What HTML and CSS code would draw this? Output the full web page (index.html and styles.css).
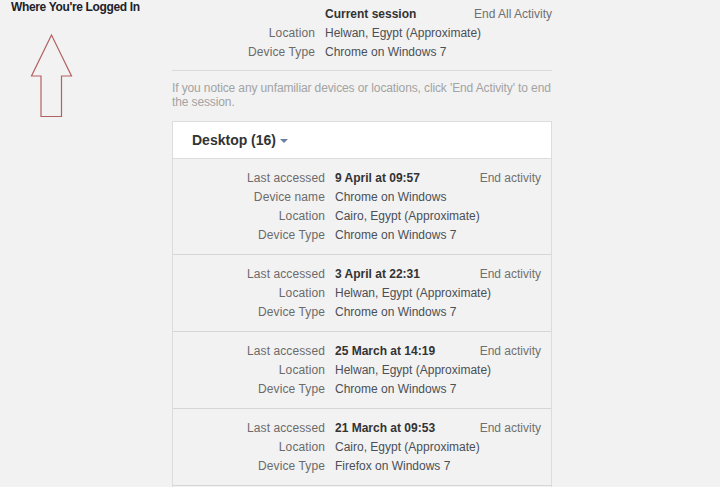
FILE: index.html
```html
<!DOCTYPE html>
<html lang="en">
<head>
    <meta charset="UTF-8">
    <meta name="viewport" content="width=device-width, initial-scale=1.0">
    <title>Where You're Logged In</title>
    <link rel="stylesheet" href="styles.css">
</head>
<body>
    <div id="page">
        <div id="sideColumn">
            <h1>Where You're Logged In</h1>
            <svg class="arrow" width="80" height="110" viewBox="0 0 80 110">
                <polygon points="40.5,21 20.5,62 30,62 30,102.5 50.5,102.5 50.5,62 60.5,62" fill="none" stroke="#b36060" stroke-width="1.2" stroke-linejoin="miter"/>
            </svg>
        </div>

        <div id="mainColumn">
            <div class="current">
                <div class="info-row">
                    <span class="label"></span>
                    <span class="value strong">Current session</span>
                    <span class="action">End All Activity</span>
                </div>
                <div class="info-row">
                    <span class="label">Location</span>
                    <span class="value">Helwan, Egypt (Approximate)</span>
                </div>
                <div class="info-row">
                    <span class="label">Device Type</span>
                    <span class="value">Chrome on Windows 7</span>
                </div>
            </div>

            <p class="notice">If you notice any unfamiliar devices or locations, click 'End Activity' to end the session.</p>

            <div class="card">
                <div class="card-header">
                    Desktop (16) <span class="caret"></span>
                </div>

                <div class="session">
                    <div class="info-row">
                        <span class="label">Last accessed</span>
                        <span class="value strong">9 April at 09:57</span>
                        <span class="action">End activity</span>
                    </div>
                    <div class="info-row">
                        <span class="label">Device name</span>
                        <span class="value">Chrome on Windows</span>
                    </div>
                    <div class="info-row">
                        <span class="label">Location</span>
                        <span class="value">Cairo, Egypt (Approximate)</span>
                    </div>
                    <div class="info-row">
                        <span class="label">Device Type</span>
                        <span class="value">Chrome on Windows 7</span>
                    </div>
                </div>

                <div class="session">
                    <div class="info-row">
                        <span class="label">Last accessed</span>
                        <span class="value strong">3 April at 22:31</span>
                        <span class="action">End activity</span>
                    </div>
                    <div class="info-row">
                        <span class="label">Location</span>
                        <span class="value">Helwan, Egypt (Approximate)</span>
                    </div>
                    <div class="info-row">
                        <span class="label">Device Type</span>
                        <span class="value">Chrome on Windows 7</span>
                    </div>
                </div>

                <div class="session">
                    <div class="info-row">
                        <span class="label">Last accessed</span>
                        <span class="value strong">25 March at 14:19</span>
                        <span class="action">End activity</span>
                    </div>
                    <div class="info-row">
                        <span class="label">Location</span>
                        <span class="value">Helwan, Egypt (Approximate)</span>
                    </div>
                    <div class="info-row">
                        <span class="label">Device Type</span>
                        <span class="value">Chrome on Windows 7</span>
                    </div>
                </div>

                <div class="session">
                    <div class="info-row">
                        <span class="label">Last accessed</span>
                        <span class="value strong">21 March at 09:53</span>
                        <span class="action">End activity</span>
                    </div>
                    <div class="info-row">
                        <span class="label">Location</span>
                        <span class="value">Cairo, Egypt (Approximate)</span>
                    </div>
                    <div class="info-row">
                        <span class="label">Device Type</span>
                        <span class="value">Firefox on Windows 7</span>
                    </div>
                </div>

                <div class="session-more"></div>
            </div>
        </div>
    </div>
</body>
</html>
```

FILE: styles.css
```css
body {
    font-family: 'Liberation Sans', Arial, sans-serif;
    font-size: 12px;
    background-color: #f2f2f2;
    color: #4b4f56;
    margin: 0;
    padding: 0;
    height: 100vh;
    overflow: hidden;
}

#page {
    display: flex;
    align-items: flex-start;
}

#sideColumn {
    width: 161px;
    padding-left: 11px;
}

h1 {
    font-size: 12px;
    font-weight: bold;
    line-height: 14px;
    letter-spacing: -0.35px;
    color: #1d2129;
    margin: 0;
}

.arrow {
    display: block;
}

#mainColumn {
    width: 380px;
}

/* current session block */
.current {
    padding-top: 5px;
    padding-bottom: 8px;
    border-bottom: 1px solid #dadada;
}

.current .info-row {
    grid-template-columns: 143px 1fr auto;
}

.info-row {
    display: grid;
    grid-template-columns: 152px 1fr auto;
    column-gap: 10px;
    line-height: 19px;
    white-space: nowrap;
}

.label {
    text-align: right;
    color: #6b6b6b;
    letter-spacing: 0.1px;
}

.value {
    color: #4b4f56;
}

.value.strong {
    font-weight: bold;
    color: #333;
}

.action {
    color: #707070;
}

.notice {
    color: #a3a3a3;
    line-height: 14px;
    letter-spacing: -0.12px;
    margin: 10px 0 12px 0;
}

/* device card */
.card {
    border: 1px solid #dcdcdc;
    border-bottom: none;
}

.card-header {
    background-color: #ffffff;
    height: 36px;
    line-height: 36px;
    padding-left: 19px;
    font-size: 14px;
    font-weight: bold;
    color: #333;
    border-bottom: 1px solid #dcdcdc;
}

.caret {
    display: inline-block;
    width: 0;
    height: 0;
    border-left: 4px solid transparent;
    border-right: 4px solid transparent;
    border-top: 4px solid #6d7fa3;
    vertical-align: middle;
    margin-left: 0;
}

.session {
    padding: 10px 10px 9px 0;
    border-bottom: 1px solid #d6d6d6;
}

.session-more {
    height: 20px;
}
```
